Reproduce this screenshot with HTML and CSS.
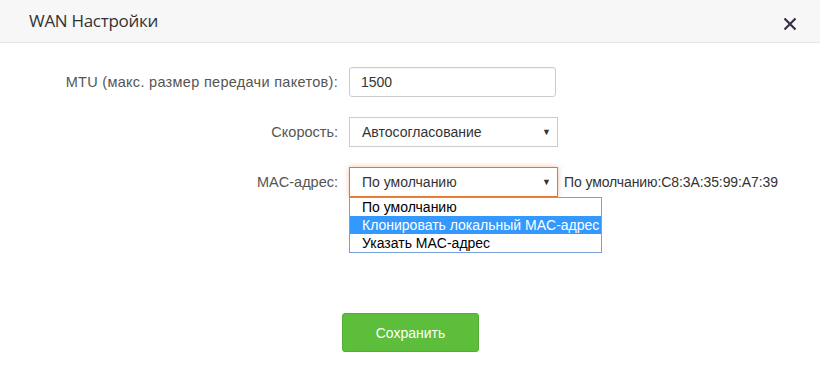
FILE: index.html
```html
<!DOCTYPE html>
<html lang="ru">
<head>
<meta charset="utf-8">
<title>WAN Настройки</title>
<link rel="stylesheet" href="styles.css">
</head>
<body>
<div class="dialog">
  <header class="dialog-head">
    <h1 class="dialog-title">WAN Настройки</h1>
    <button class="close" aria-label="Закрыть">
      <svg width="14" height="14" viewBox="0 0 14 14"><path d="M1.5 1.5 L12.5 12.5 M12.5 1.5 L1.5 12.5" stroke="#3b2d45" stroke-width="2.2" stroke-linecap="butt"/></svg>
    </button>
  </header>
  <form class="form">
    <div class="row">
      <label class="label label-wide">MTU (макс. размер передачи пакетов):</label>
      <div class="control"><input class="input" type="text" value="1500"></div>
    </div>
    <div class="row">
      <label class="label">Скорость:</label>
      <div class="control"><div class="select">Автосогласование<span class="arrow">▼</span></div></div>
    </div>
    <div class="row">
      <label class="label">MAC-адрес:</label>
      <div class="control">
        <div class="select focus">По умолчанию<span class="arrow">▼</span></div>
        <ul class="menu">
          <li>По умолчанию</li>
          <li class="active">Клонировать локальный MAC-адрес</li>
          <li>Указать MAC-адрес</li>
        </ul>
        <span class="hint">По умолчанию:C8:3A:35:99:A7:39</span>
      </div>
    </div>
    <div class="actions">
      <button type="button" class="btn">Сохранить</button>
    </div>
  </form>
</div>
</body>
</html>
```
FILE: styles.css
```css
* { box-sizing: border-box; }
html, body { margin: 0; padding: 0; background: #fff; }
body { font-family: "Liberation Sans", Arial, sans-serif; font-size: 14px; color: #333; width: 820px; height: 374px; overflow: hidden; }

.dialog-head {
  height: 43px;
  background: #f7f7f7;
  border-bottom: 1px solid #e6e6e6;
  display: flex;
  align-items: center;
  justify-content: space-between;
  padding: 0 23px 0 29px;
}
.dialog-title {
  margin: 0;
  font-family: "Open Sans", "Noto Sans", sans-serif;
  font-weight: 400;
  font-size: 17px;
  letter-spacing: -0.3px;
  color: #333;
  position: relative;
  top: -1px;
}
.close {
  border: 0;
  background: none;
  padding: 0;
  width: 14px;
  height: 14px;
  margin-top: 6px;
  display: flex;
}

.form { padding-top: 24px; }
.row {
  display: flex;
  align-items: center;
  height: 30px;
  margin-bottom: 20px;
}
.label {
  width: 338px;
  text-align: right;
  color: #555;
  font-size: 14.5px;
  white-space: nowrap;
}
.label-wide { letter-spacing: 0.3px; }
.control {
  margin-left: 11px;
  position: relative;
  display: flex;
  align-items: center;
}
.input {
  width: 207px;
  height: 30px;
  border: 1px solid #ccc;
  border-radius: 3px;
  padding: 0 11px;
  font: 14px "Liberation Sans", Arial, sans-serif;
  color: #333;
  box-shadow: inset 0 1px 1px rgba(0,0,0,0.04);
}
.select {
  width: 209px;
  height: 30px;
  border: 1px solid #ccc;
  padding: 0 12px;
  display: flex;
  align-items: center;
  justify-content: space-between;
  color: #333;
  background: #fff;
}
.select.focus {
  border-color: #e5772f;
  box-shadow: 0 0 5px rgba(236, 130, 60, 0.5);
}
.arrow {
  font-size: 9px;
  color: #333;
  margin-right: -6px;
}
.menu {
  position: absolute;
  left: 0;
  top: 30px;
  margin: 0;
  padding: 0;
  list-style: none;
  width: 253px;
  border: 1px solid #7a9fd6;
  background: #fff;
  z-index: 2;
}
.menu li {
  height: 18px;
  line-height: 18px;
  padding-left: 12px;
  color: #000;
  white-space: nowrap;
}
.menu li.active { background: #3399ff; color: #fff; }
.hint {
  margin-left: 6px;
  font-size: 14px;
  letter-spacing: -0.1px;
  color: #333;
  white-space: nowrap;
}

.actions {
  display: flex;
  justify-content: center;
  padding-top: 96px;
  padding-left: 1px;
}
.btn {
  width: 137px;
  height: 39px;
  background: #5cbe3a;
  border: 1px solid #53ad34;
  border-radius: 3px;
  color: #fff;
  font: 14px "Liberation Sans", Arial, sans-serif;
}
```
